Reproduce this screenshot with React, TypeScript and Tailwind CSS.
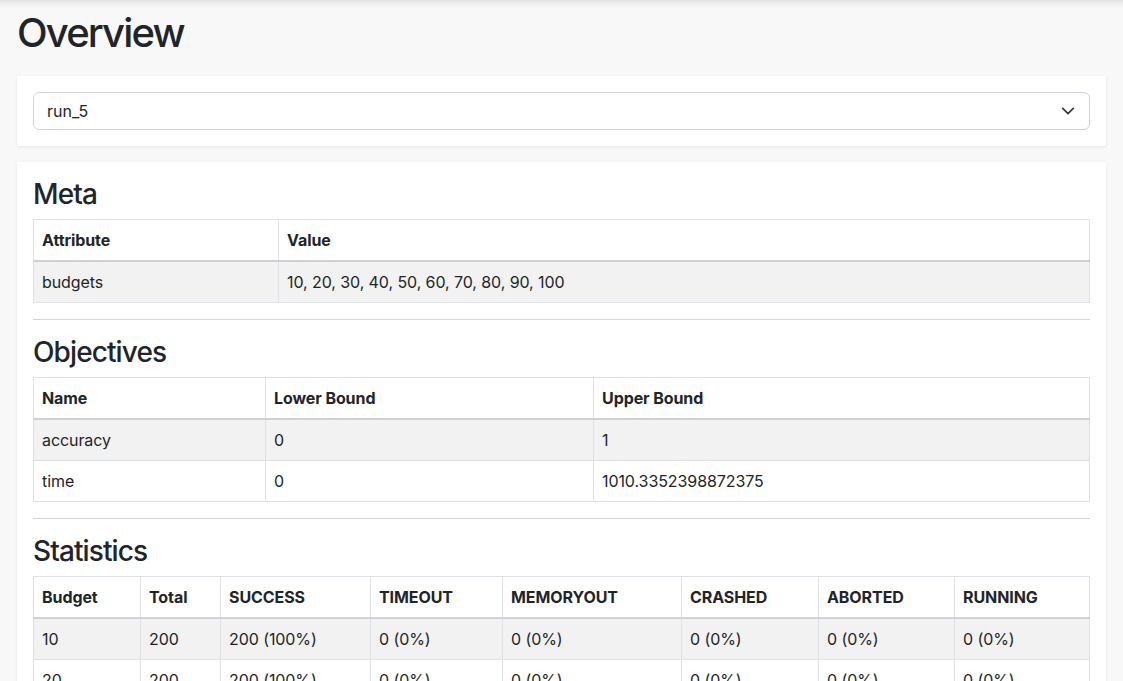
import React from 'react';

const cell = 'border border-[#dee2e6] px-2 py-2 text-left';

const metaRows = [['budgets', '10, 20, 30, 40, 50, 60, 70, 80, 90, 100']];

const objectives = [
  ['accuracy', '0', '1'],
  ['time', '0', '1010.3352398872375'],
];

const statHeaders = ['Budget', 'Total', 'SUCCESS', 'TIMEOUT', 'MEMORYOUT', 'CRASHED', 'ABORTED', 'RUNNING'];
const statWidths = ['w-[107px]', 'w-[80px]', 'w-[150px]', 'w-[132px]', 'w-[179px]', 'w-[137px]', 'w-[136px]', ''];

const statRows = [10, 20, 30, 40, 50, 60, 70, 80, 90, 100].map((b) => [
  String(b),
  '200',
  '200 (100%)',
  '0 (0%)',
  '0 (0%)',
  '0 (0%)',
  '0 (0%)',
  '0 (0%)',
]);

function DataTable({ headers, widths, rows }: { headers: string[]; widths: string[]; rows: string[][] }) {
  return (
    <table className="w-full table-fixed border-collapse text-[16px] leading-6 tracking-[-0.005em]">
      <thead>
        <tr>
          {headers.map((h, i) => (
            <th key={h} className={`${cell} ${widths[i]} border-b-2 border-b-[#cfd1d4] font-bold`}>
              {h}
            </th>
          ))}
        </tr>
      </thead>
      <tbody>
        {rows.map((r, ri) => (
          <tr key={ri} className={ri % 2 === 0 ? 'bg-[#f2f2f2]' : 'bg-white'}>
            {r.map((c, ci) => (
              <td key={ci} className={cell}>
                {c}
              </td>
            ))}
          </tr>
        ))}
      </tbody>
    </table>
  );
}

function Section({ title, children }: { title: string; children: React.ReactNode }) {
  return (
    <div>
      <h3 className="mb-2 text-[28px] font-medium leading-[33px] tracking-[-0.032em]">{title}</h3>
      {children}
    </div>
  );
}

export default function App() {
  return (
    <div
      className="min-h-screen bg-[#f8f8f8] px-[17px] pt-[9px] pb-6 text-[#212529] shadow-[inset_0_10px_10px_-10px_rgba(0,0,0,0.18)]"
      style={{ fontFamily: 'Inter, "Noto Sans", sans-serif' }}
    >
      <h1 className="mb-[19px] text-[40px] font-medium leading-[48px] tracking-[-0.046em]">Overview</h1>

      <div className="mb-4 bg-white p-4 shadow-[0_1px_3px_rgba(0,0,0,0.08)]">
        <div className="flex h-[38px] items-center justify-between rounded-md border border-[#ced4da] pl-[13px] pr-[14px] text-[16px]">
          <span>run_5</span>
          <svg width="14" height="14" viewBox="0 0 16 16" fill="none" stroke="#343a40" strokeWidth="2" strokeLinecap="round" strokeLinejoin="round">
            <path d="M2 5l6 6 6-6" />
          </svg>
        </div>
      </div>

      <div className="bg-white p-4 shadow-[0_1px_3px_rgba(0,0,0,0.08)]">
        <Section title="Meta">
          <DataTable headers={['Attribute', 'Value']} widths={['w-[245px]', '']} rows={metaRows} />
        </Section>
        <hr className="my-4 border-t border-[#d4d5d7]" />
        <Section title="Objectives">
          <DataTable headers={['Name', 'Lower Bound', 'Upper Bound']} widths={['w-[232px]', 'w-[328px]', '']} rows={objectives} />
        </Section>
        <hr className="my-4 border-t border-[#d4d5d7]" />
        <Section title="Statistics">
          <DataTable headers={statHeaders} widths={statWidths} rows={statRows} />
        </Section>
      </div>
    </div>
  );
}
